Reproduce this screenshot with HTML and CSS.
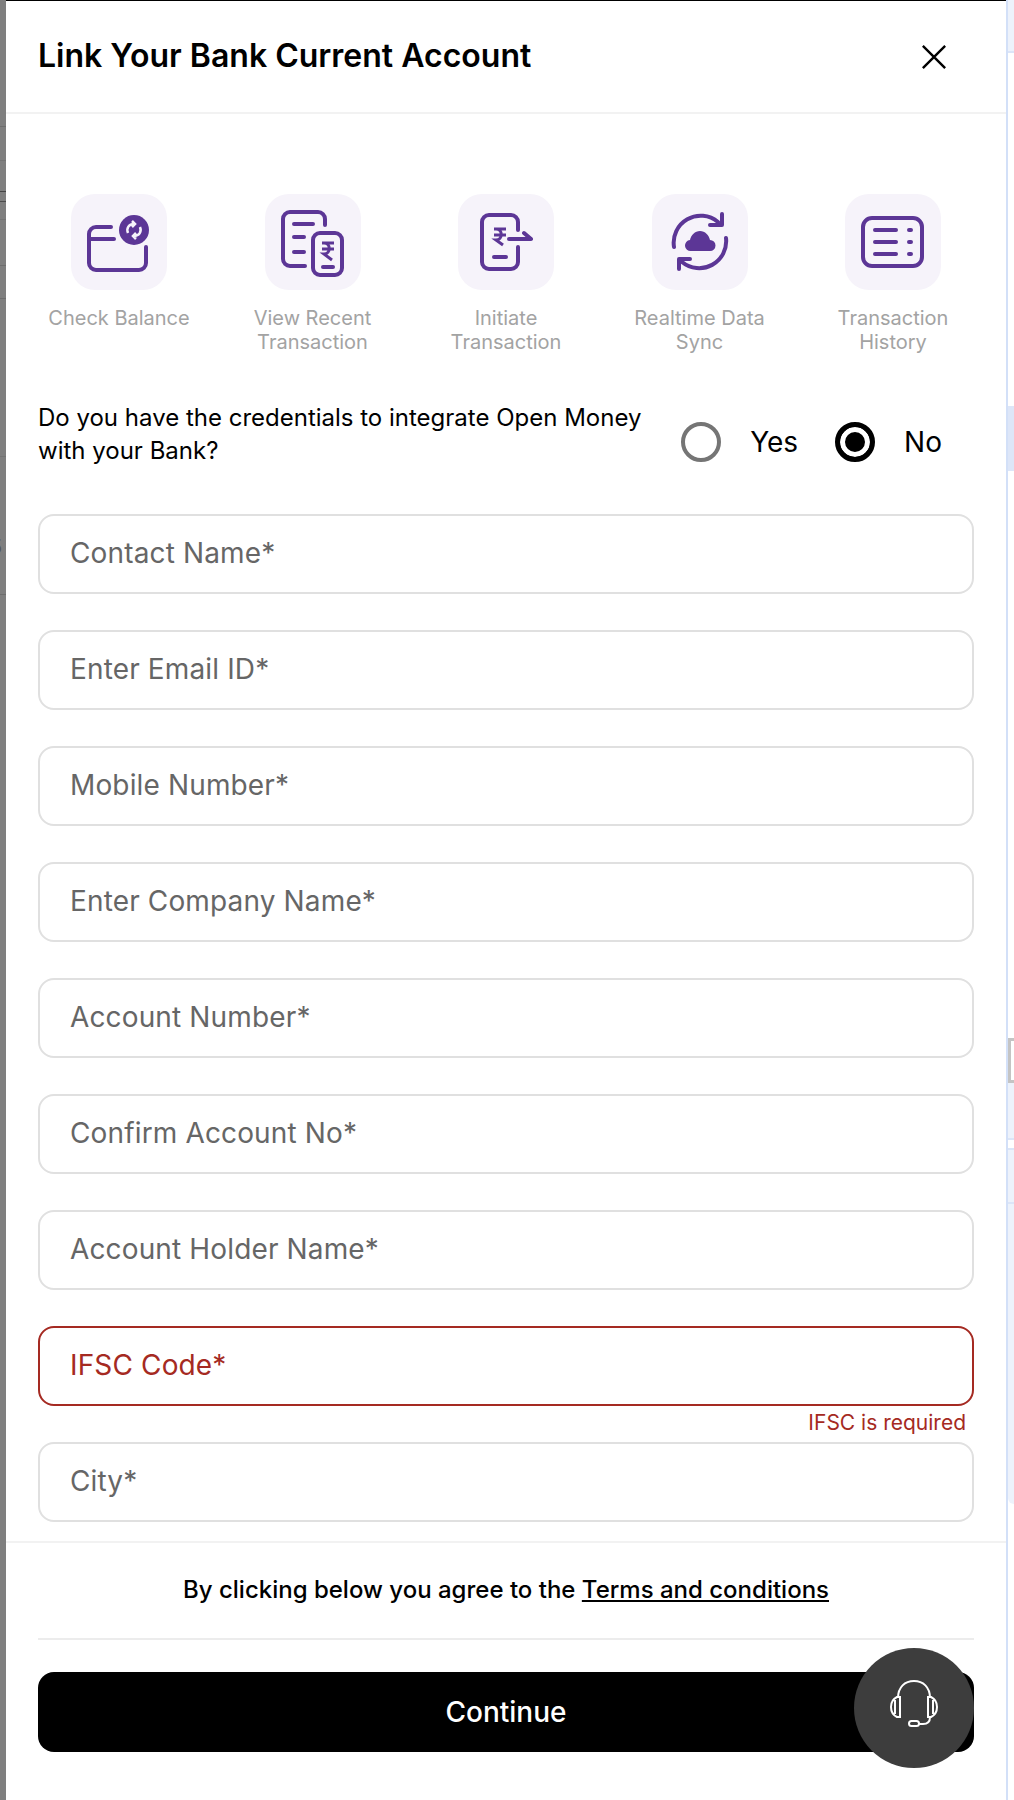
FILE: index.html
```html
<!DOCTYPE html>
<html>
<head>
	<meta charset="utf-8"/>
	<title>Link Your Bank Current Account</title>
	<link rel="stylesheet" href="styles.css">
</head>
<body>
<div class="page">
	<div class="backdrop"><span class="backdrop-digit">5</span></div>

	<div class="modal">
		<div class="modal-head">
			<h1 class="modal-title">Link Your Bank Current Account</h1>
			<svg class="close-icon" viewBox="0 0 28 28">
				<path d="M2 2 26 26M26 2 2 26"/>
			</svg>
		</div>

		<div class="modal-body">
			<div class="features">
				<div class="feature">
					<div class="feature-tile">
						<svg class="feature-icon" viewBox="0 0 64 64">
							<path class="ln" d="M24 17H9a7 7 0 0 0-7 7v29a7 7 0 0 0 7 7h43a7 7 0 0 0 7-7V37M3 29h24"/>
							<circle class="fill" cx="47" cy="20" r="15"/>
							<path class="ln-w" d="M41 23c-2-5 1-9 6-9M53 17c2 5-1 9-6 9M45 11l3 3-3 3M49 23l-3 3 3 3"/>
						</svg>
					</div>
					<div class="feature-label">Check Balance</div>
				</div>
				<div class="feature">
					<div class="feature-tile">
						<svg class="feature-icon" viewBox="0 0 64 64">
							<path class="ln" d="M44 15V9a7 7 0 0 0-7-7H9a7 7 0 0 0-7 7v40a7 7 0 0 0 7 7h15M13 14h19M13 27h10M13 42h10"/>
							<rect class="ln" x="32" y="23" width="29" height="42" rx="7"/>
							<path class="ln" d="M42 57h10"/>
							<path class="ln-t" d="M41 33h12M41 39h12M43 33c7 0 7 11 0 11l8 6"/>
						</svg>
					</div>
					<div class="feature-label">View Recent<br>Transaction</div>
				</div>
				<div class="feature">
					<div class="feature-tile">
						<svg class="feature-icon" viewBox="0 0 64 64">
							<path class="ln" d="M44 20v-8a7 7 0 0 0-7-7H15a7 7 0 0 0-7 7v40a7 7 0 0 0 7 7h22a7 7 0 0 0 7-7V37M20 47h12M35 29h22M50 23l7 6"/>
							<path class="ln-t" d="M20 19h12M20 25h12M22 19c7 0 7 11 0 11l7 5"/>
						</svg>
					</div>
					<div class="feature-label">Initiate<br>Transaction</div>
				</div>
				<div class="feature">
					<div class="feature-tile">
						<svg class="feature-icon" viewBox="0 0 64 64">
							<path class="ln" d="M6 37A27 27 0 0 1 50 12M58 28A27 27 0 0 1 14 52"/>
							<path class="ln" d="M54 4v11H42M11 59V49h11"/>
							<path class="fill" d="M23 41a5.500 5.500 0 0 1-1-11c1-5 5-9 10-9s9 4 10 9a5.500 5.500 0 0 1 0 11z"/>
						</svg>
					</div>
					<div class="feature-label">Realtime Data<br>Sync</div>
				</div>
				<div class="feature">
					<div class="feature-tile">
						<svg class="feature-icon" viewBox="0 0 64 64">
							<rect class="ln" x="2" y="8" width="59" height="48" rx="9"/>
							<path class="ln" d="M14 20h21M14 32h21M14 44h21M48 20h2M48 32h2M48 44h2"/>
						</svg>
					</div>
					<div class="feature-label">Transaction<br>History</div>
				</div>
			</div>

			<div class="cred-row">
				<div class="cred-text">Do you have the credentials to integrate Open Money with your Bank?</div>
				<div class="radio-group">
					<span class="radio"></span>
					<span class="radio-label">Yes</span>
					<span class="radio checked"></span>
					<span class="radio-label">No</span>
				</div>
			</div>

			<div class="fields">
				<div class="field"><div class="field-box">Contact Name*</div></div>
				<div class="field"><div class="field-box">Enter Email ID*</div></div>
				<div class="field"><div class="field-box">Mobile Number*</div></div>
				<div class="field"><div class="field-box">Enter Company Name*</div></div>
				<div class="field"><div class="field-box">Account Number*</div></div>
				<div class="field"><div class="field-box">Confirm Account No*</div></div>
				<div class="field"><div class="field-box">Account Holder Name*</div></div>
				<div class="field">
					<div class="field-box error">IFSC Code*</div>
					<div class="field-error">IFSC is required</div>
				</div>
				<div class="field"><div class="field-box">City*</div></div>
			</div>
		</div>

		<div class="modal-foot">
			<div class="terms">By clicking below you agree to the <a class="terms-link">Terms and conditions</a></div>
			<div class="foot-line"></div>
			<button class="continue-btn">Continue</button>
		</div>

		<div class="chat-btn">
			<svg class="chat-icon" viewBox="0 0 48 48">
				<path d="M8 18C8 7 15 1 24 1s16 6 16 17"/>
				<path d="M10 17v20H7C3 35 1 31 1 27s2-8 6-10zM38 17v20h3c4-2 6-6 6-10s-2-8-6-10zM5 20v14M43 20v14"/>
				<path d="M40 37c0 5-3 7-7 7h-4"/>
				<rect x="19" y="41" width="10" height="5" rx="2.500"/>
			</svg>
		</div>
	</div>

	<div class="side">
		<div class="side-a"></div>
		<div class="side-b"></div>
		<div class="side-c"></div>
		<div class="side-d"></div>
		<div class="side-e"></div>
		<div class="side-f"></div>
	</div>
</div>
</body>
</html>
```

FILE: styles.css
```css
*{
	box-sizing: border-box;
}
body{
	margin: 0;
	background: white;
	font-family: "Inter", "Liberation Sans", sans-serif;
}
.page{
	display: flex;
	height: 1800px;
	overflow: hidden;
}

/* dimmed page behind the modal */
.backdrop{
	width: 6px;
	overflow: hidden;
	padding-top: 535px;
	background-color: #7f7f7f;
	background-image:
		linear-gradient(#6e6e6e, #6e6e6e),
		linear-gradient(#747474, #747474),
		linear-gradient(#444444, #444444),
		linear-gradient(#4c4c4c, #4c4c4c),
		linear-gradient(#747474, #747474),
		linear-gradient(#6e6e6e, #6e6e6e),
		linear-gradient(#6e6e6e, #6e6e6e),
		linear-gradient(#747474, #747474),
		linear-gradient(#6e6e6e, #6e6e6e);
	background-size: 100% 1px;
	background-repeat: no-repeat;
	background-position: 0 126px, 0 160px, 0 191px, 0 201px, 0 219px, 0 265px, 0 298px, 0 456px, 0 594px;
}
.backdrop-digit{
	display: block;
	margin-left: -10px;
	font-size: 20px;
	line-height: 24px;
	color: #555555;
}

.modal{
	position: relative;
	width: 1000px;
	height: 1800px;
	flex: none;
	display: flex;
	flex-direction: column;
	background: white;
	border-top: 1px solid black;
}
.modal-head{
	height: 113px;
	flex: none;
	display: flex;
	align-items: center;
	justify-content: space-between;
	padding: 0 30px 0 32px;
	border-bottom: 2px solid #f2f2f2;
}
.modal-title{
	margin: 0 0 2px;
	font-size: 32px;
	font-weight: 600;
	color: black;
}
.close-icon{
	width: 26px;
	height: 26px;
	margin: 0 29px 0 0;
	fill: none;
	stroke: black;
	stroke-width: 2.600;
}

.modal-body{
	flex: 1;
	overflow: hidden;
	padding: 80px 32px 0;
}

.features{
	display: flex;
	justify-content: space-between;
}
.feature{
	width: 162px;
	display: flex;
	flex-direction: column;
	align-items: center;
}
.feature-tile{
	width: 96px;
	height: 96px;
	display: flex;
	align-items: center;
	justify-content: center;
	border-radius: 24px;
	background: #f6f3fa;
}
.feature-icon{
	width: 64px;
	height: 64px;
	overflow: visible;
}
.ln{
	fill: none;
	stroke: #5c3696;
	stroke-width: 4;
	stroke-linecap: round;
	stroke-linejoin: round;
}
.ln-t{
	fill: none;
	stroke: #5c3696;
	stroke-width: 3;
}
.ln-w{
	fill: none;
	stroke: #f6f3fa;
	stroke-width: 2.500;
}
.fill{
	fill: #5c3696;
}
.feature-label{
	margin-top: 16px;
	font-size: 20px;
	line-height: 24px;
	text-align: center;
	color: #a3a3a3;
	white-space: nowrap;
}

.cred-row{
	display: flex;
	align-items: center;
	justify-content: space-between;
	margin-top: 47px;
	padding-right: 32px;
}
.cred-text{
	width: 620px;
	font-size: 24px;
	line-height: 33px;
	color: black;
}
.radio-group{
	display: flex;
	align-items: center;
	margin-top: 16px;
}
.radio{
	width: 40px;
	height: 40px;
	border: 4px solid #757575;
	border-radius: 50%;
}
.radio.checked{
	border: 5px solid black;
	background: black;
	box-shadow: inset 0 0 0 5px white;
	margin-left: 37px;
}
.radio-label{
	margin-left: 29px;
	font-size: 28px;
	color: black;
}

.fields{
	display: flex;
	flex-direction: column;
	gap: 36px;
	margin-top: 47px;
}
.field{
	position: relative;
}
.field-box{
	height: 80px;
	display: flex;
	align-items: center;
	padding: 0 0 2px 30px;
	border: 2px solid #e0e0e0;
	border-radius: 16px;
	font-size: 28px;
	letter-spacing: 0.14px;
	color: #666666;
}
.field-box.error{
	border-color: #a52a22;
	color: #a52a22;
}
.field-error{
	position: absolute;
	top: 85px;
	right: 8px;
	font-size: 21px;
	line-height: 24px;
	color: #a52a22;
}

.modal-foot{
	flex: none;
	height: 259px;
	padding: 0 32px;
	border-top: 2px solid #f2f2f2;
}
.terms{
	margin-top: 30px;
	font-size: 24px;
	font-weight: 500;
	line-height: 34px;
	text-align: center;
	color: black;
}
.terms-link{
	text-decoration: underline;
}
.foot-line{
	height: 2px;
	margin-top: 31px;
	background: #ececec;
}
.continue-btn{
	display: block;
	width: 100%;
	height: 80px;
	margin-top: 32px;
	border: 0;
	border-radius: 16px;
	background: black;
	color: white;
	font-family: inherit;
	font-size: 28px;
	font-weight: 500;
}

.chat-btn{
	position: absolute;
	left: 848px;
	top: 1647px;
	width: 120px;
	height: 120px;
	display: flex;
	align-items: center;
	justify-content: center;
	padding-bottom: 9px;
	border-radius: 50%;
	background: #3d3d3d;
}
.chat-icon{
	width: 48px;
	height: 48px;
	fill: none;
	stroke: white;
	stroke-width: 2;
}

/* page behind, right of the modal */
.side{
	flex: 1;
	display: flex;
	flex-direction: column;
	border-left: 2px solid #d3e0f8;
}
.side-a{
	height: 53px;
	background: #edf2fb;
	border-bottom: 2px solid #dbe5f8;
}
.side-b{
	height: 65px;
	margin-top: 353px;
	background: #dde6f8;
}
.side-c{
	height: 45px;
	margin-top: 567px;
	border: 3px solid #c4c4c4;
	border-right: 0;
}
.side-d{
	height: 57px;
	background: #edf2fb;
	border-bottom: 2px solid #dbe5f8;
}
.side-e{
	height: 56px;
	margin-top: 8px;
	background: #edf2fb;
	border-top: 2px solid #dbe5f8;
	border-bottom: 2px solid #dbe5f8;
}
.side-f{
	height: 300px;
	background: #edf2fb;
	border-bottom-left-radius: 20px;
}
```
